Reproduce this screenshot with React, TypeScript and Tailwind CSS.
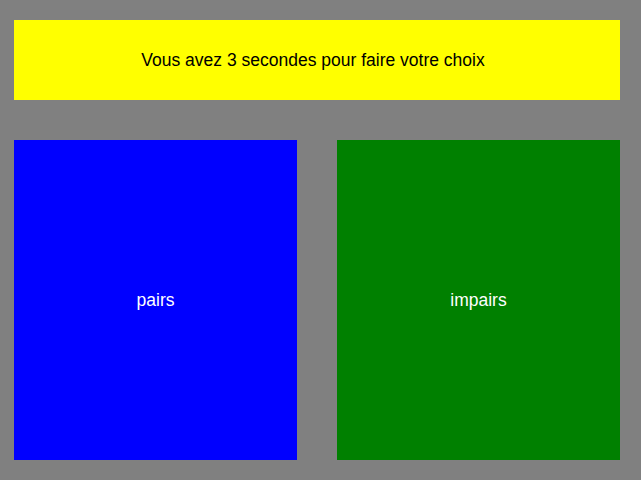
export default function App() {
  return (
    <div
      className="w-[641px] h-[480px] bg-[#808080] pt-[20px] pl-[14px] flex flex-col gap-[40px]"
      style={{ fontFamily: '"Liberation Sans", Arial, sans-serif' }}
    >
      <div className="w-[606px] h-[80px] bg-[#ffff00] flex items-center justify-center text-black text-[17.5px] pr-[8px]">
        Vous avez 3 secondes pour faire votre choix
      </div>
      <div className="flex gap-[40px]">
        <div className="w-[283px] h-[320px] bg-[#0000ff] flex items-center justify-center text-white text-[17.5px]">
          pairs
        </div>
        <div className="w-[283px] h-[320px] bg-[#008000] flex items-center justify-center text-white text-[17.5px]">
          impairs
        </div>
      </div>
    </div>
  );
}
